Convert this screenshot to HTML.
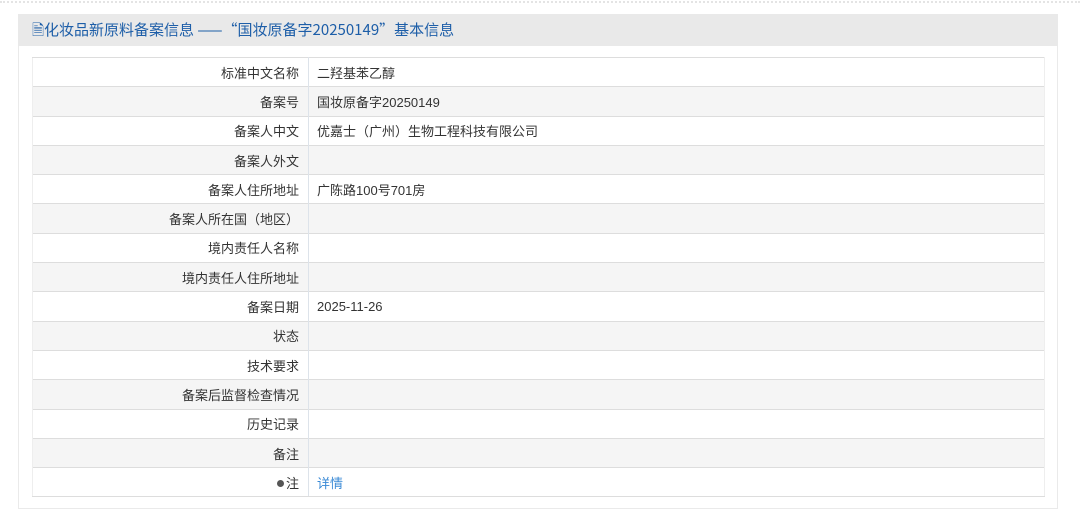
<!DOCTYPE html>
<html><head><meta charset="utf-8"><style>
body{margin:0;width:1080px;height:524px;background:#fff;font-family:"Liberation Sans","Noto Sans CJK SC",sans-serif;position:relative;overflow:hidden}
.dots{position:absolute;left:0;top:1px;width:1080px;height:0;border-top:2px dotted #e4e4e4}
.panel{position:absolute;left:18px;top:14px;width:1038px;height:494px;border:1px solid #eaeaea;border-top:none;background:#fff}
.hd{position:absolute;left:18px;top:14px;width:1040px;height:32px;background:#e9e9e9;color:#1d5ea8;font-size:15px;line-height:32px;text-indent:14px;font-family:"Noto Sans CJK SC","Liberation Sans",sans-serif}
table{position:absolute;left:32px;top:57px;width:1013px;border-collapse:collapse;font-size:13px;color:#333;table-layout:fixed}
td{height:28.3px;border-top:1px solid #ddd;padding:0}
tr:nth-child(even) td{background:#f5f5f5}
tr:last-child td{border-bottom:1px solid #ddd}
td.l{width:266px;text-align:right;padding-right:9px;border-right:1px solid #dde3ea;border-left:1px solid #eee}
td.v{padding-left:8px;border-right:1px solid #eee}
a{color:#3a8ad6;text-decoration:none}
.b{display:inline-block;width:7px;height:7px;border-radius:50%;background:#555;margin-right:2px;vertical-align:1px}
</style></head><body>
<div class="dots"></div>
<div class="panel"></div>
<div class="hd">🗎化妆品新原料备案信息 ——“国妆原备字20250149”基本信息</div>
<table>
<tr><td class="l">标准中文名称</td><td class="v">二羟基苯乙醇</td></tr>
<tr><td class="l">备案号</td><td class="v">国妆原备字20250149</td></tr>
<tr><td class="l">备案人中文</td><td class="v">优嘉士（广州）生物工程科技有限公司</td></tr>
<tr><td class="l">备案人外文</td><td class="v"></td></tr>
<tr><td class="l">备案人住所地址</td><td class="v">广陈路100号701房</td></tr>
<tr><td class="l">备案人所在国（地区）</td><td class="v"></td></tr>
<tr><td class="l">境内责任人名称</td><td class="v"></td></tr>
<tr><td class="l">境内责任人住所地址</td><td class="v"></td></tr>
<tr><td class="l">备案日期</td><td class="v">2025-11-26</td></tr>
<tr><td class="l">状态</td><td class="v"></td></tr>
<tr><td class="l">技术要求</td><td class="v"></td></tr>
<tr><td class="l">备案后监督检查情况</td><td class="v"></td></tr>
<tr><td class="l">历史记录</td><td class="v"></td></tr>
<tr><td class="l">备注</td><td class="v"></td></tr>
<tr><td class="l"><span class="b"></span>注</td><td class="v"><a>详情</a></td></tr>
</table>
</body></html>
